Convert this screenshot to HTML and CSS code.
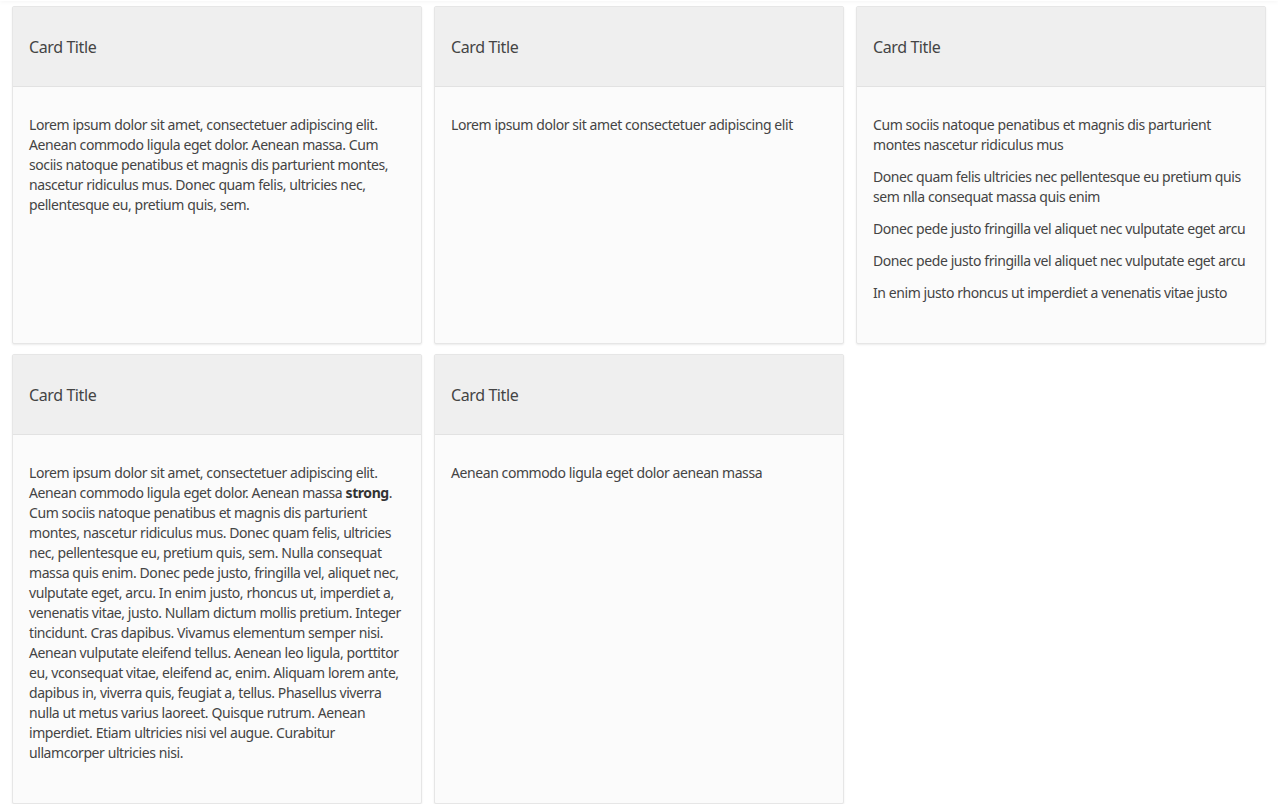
FILE: index.html
```html
<!DOCTYPE html>
<html>
<head>
<meta charset="utf-8">
<link rel="stylesheet" href="styles.css">
</head>
<body>
<div class="topbar"></div>
<main class="grid">
  <section class="card">
    <header class="card-header">Card Title</header>
    <div class="card-body">
      <p>Lorem ipsum dolor sit amet, consectetuer adipiscing elit. Aenean commodo ligula eget dolor. Aenean massa. Cum sociis natoque penatibus et magnis dis parturient montes, nascetur ridiculus mus. Donec quam felis, ultricies nec, pellentesque eu, pretium quis, sem.</p>
    </div>
  </section>
  <section class="card">
    <header class="card-header">Card Title</header>
    <div class="card-body">
      <p>Lorem ipsum dolor sit amet consectetuer adipiscing elit</p>
    </div>
  </section>
  <section class="card">
    <header class="card-header">Card Title</header>
    <div class="card-body">
      <p>Cum sociis natoque penatibus et magnis dis parturient montes nascetur ridiculus mus</p>
      <p>Donec quam felis ultricies nec pellentesque eu pretium quis sem nlla consequat massa quis enim</p>
      <p>Donec pede justo fringilla vel aliquet nec vulputate eget arcu</p>
      <p>Donec pede justo fringilla vel aliquet nec vulputate eget arcu</p>
      <p>In enim justo rhoncus ut imperdiet a venenatis vitae justo</p>
    </div>
  </section>
  <section class="card">
    <header class="card-header">Card Title</header>
    <div class="card-body">
      <p>Lorem ipsum dolor sit amet, consectetuer adipiscing elit. Aenean commodo ligula eget dolor. Aenean massa <strong>strong</strong>. Cum sociis natoque penatibus et magnis dis parturient montes, nascetur ridiculus mus. Donec quam felis, ultricies nec, pellentesque eu, pretium quis, sem. Nulla consequat massa quis enim. Donec pede justo, fringilla vel, aliquet nec, vulputate eget, arcu. In enim justo, rhoncus ut, imperdiet a, venenatis vitae, justo. Nullam dictum mollis pretium. Integer tincidunt. Cras dapibus. Vivamus elementum semper nisi. Aenean vulputate eleifend tellus. Aenean leo ligula, porttitor eu, vconsequat vitae, eleifend ac, enim. Aliquam lorem ante, dapibus in, viverra quis, feugiat a, tellus. Phasellus viverra nulla ut metus varius laoreet. Quisque rutrum. Aenean imperdiet. Etiam ultricies nisi vel augue. Curabitur ullamcorper ultricies nisi.</p>
    </div>
  </section>
  <section class="card">
    <header class="card-header">Card Title</header>
    <div class="card-body">
      <p>Aenean commodo ligula eget dolor aenean massa</p>
    </div>
  </section>
</main>
</body>
</html>
```

FILE: styles.css
```css
* { box-sizing: border-box; }
html, body { margin: 0; padding: 0; background: #fff; }
body {
  font-family: "Noto Sans", "Open Sans", sans-serif;
  color: #444;
  font-size: 14px;
  line-height: 20px;
  letter-spacing: -0.42px;
}
.topbar {
  height: 1px;
  background: #fff;
  box-shadow: 0 0 4px rgba(0,0,0,0.15);
}
.grid {
  display: grid;
  grid-template-columns: repeat(3, 410px);
  column-gap: 12px;
  row-gap: 10px;
  padding: 5px 12px 0 12px;
}
.card {
  display: flex;
  flex-direction: column;
  background: #fbfbfb;
  border: 1px solid #e6e6e6;
  border-radius: 2px;
  box-shadow: 0 1px 2px rgba(0,0,0,0.08);
}
.card-header {
  height: 80px;
  padding: 0 16px;
  display: flex;
  align-items: center;
  background: #efefef;
  border-bottom: 1px solid #e2e2e2;
  font-size: 16px;
  color: #444;
  letter-spacing: -0.4px;
}
.card-body {
  flex: 1;
  padding: 28px 16px 28px 16px;
}
.card-body p { margin: 0 0 12px 0; }
strong { font-weight: 700; color: #333; }
```
